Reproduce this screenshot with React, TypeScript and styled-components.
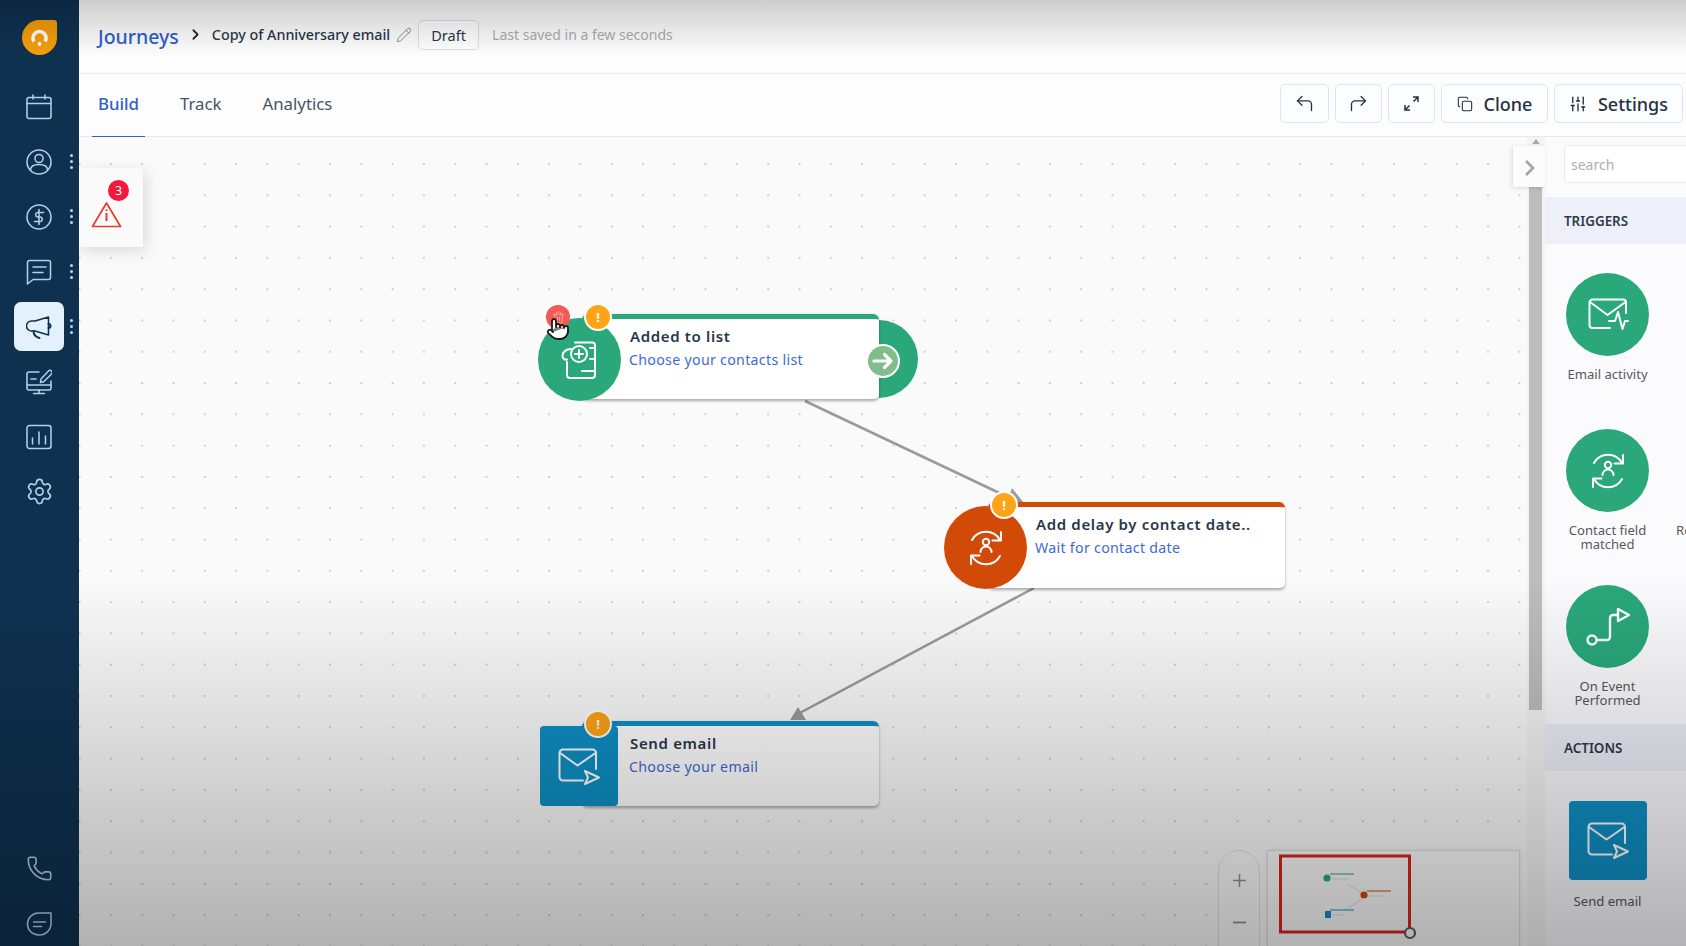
import React from "react";
import styled, { createGlobalStyle } from "styled-components";
import { ChevronRight, Copy, CornerUpLeft, CornerUpRight, Pencil, Phone, Pointer, Settings as Gear, SlidersVertical, Trash2 } from "lucide-react";

const Global = createGlobalStyle`
  html, body { margin: 0; padding: 0; height: 100%; overflow: hidden; }
  body { font-family: "Noto Sans", "Open Sans", Arial, sans-serif; background: #fcfcfd; }
  #root { height: 100%; }
  * { box-sizing: border-box; }
`;

const Shell = styled.div`display: flex; width: 1686px; height: 946px; overflow: hidden; position: relative;`;
const Scrim = styled.div`
  position: absolute; inset: 0; pointer-events: none; z-index: 50;
  background:
    linear-gradient(to bottom, rgba(0,0,0,.19) 0, rgba(0,0,0,0) 56px),
    linear-gradient(to bottom, rgba(0,0,0,0) 575px, rgba(0,0,0,.29) 946px);
`;

const Sidebar = styled.nav`
  width: 79px; flex: none; background: #0f3150; display: flex; flex-direction: column; align-items: stretch;
`;
const Logo = styled.svg`width: 35px; height: 35px; margin: 20px 0 27px 22px; display: block;`;
const NavList = styled.div`display: flex; flex-direction: column; gap: 6px;`;
const NavBottom = styled(NavList)`margin-top: auto; margin-bottom: -2px;`;
const NavRow = styled.div`display: flex; align-items: center; padding-left: 14px;`;
const NavButton = styled.div<{ $active?: boolean }>`
  width: 50px; height: 49px; border-radius: 7px; display: flex; align-items: center; justify-content: center;
  background: ${(p) => (p.$active ? "#e3f1fd" : "transparent")};
  color: ${(p) => (p.$active ? "#0f3150" : "#aed0ea")};
`;
const Kebab = styled.span`
  width: 3px; height: 3px; border-radius: 50%; background: #bcd5e8; margin-left: 5.5px;
  box-shadow: 0 -6px 0 #bcd5e8, 0 6px 0 #bcd5e8;
`;
const NavIcon = styled.svg`width: 26px; height: 26px; fill: none; stroke: currentColor; stroke-width: 1.55; stroke-linecap: round; stroke-linejoin: round;`;

const Main = styled.div`flex: 1; min-width: 0; display: flex; flex-direction: column;`;
const Header = styled.header`
  height: 74px; flex: none; display: flex; align-items: center; padding: 0 0 4px 19px; border-bottom: 1.5px solid #e7e9f1; background: #fdfdfe;
`;
const Journeys = styled.span`font-size: 19.5px; color: #2f5fca; margin-top: 4px; font-weight: 500;`;
const Crumb = styled.span`display: flex; color: #1f2d3d; margin: 0 8px 0 8px;`;
const Title = styled.span`font-size: 14.3px; color: #2b3746; font-weight: 500;`;
const EditIcon = styled.span`display: flex; color: #8f8f8f; margin: 0 6px 0 6px;`;
const Draft = styled.span`
  height: 30px; width: 61px; border: 1.5px solid #dcdfe6; border-radius: 5px; display: flex; align-items: center; justify-content: center;
  font-size: 14.5px; color: #2b3746; background: #fff;
`;
const Saved = styled.span`font-size: 14px; color: #a9adb3; margin-left: 13px;`;

const TabRow = styled.div`
  height: 63px; flex: none; display: flex; align-items: stretch; padding: 0 3px 0 13px; gap: 29px; border-bottom: 1.5px solid #e7e9f1; background: #fdfdfe;
`;
const Tab = styled.div<{ $active?: boolean }>`
  padding: 0 6px 3px; display: flex; align-items: center; font-size: 16.8px; margin-bottom: -1.5px;
  color: ${(p) => (p.$active ? "#2f5fca" : "#485463")};
  font-weight: ${(p) => (p.$active ? 500 : 400)};
  border-bottom: 2.5px solid ${(p) => (p.$active ? "#2f5fca" : "transparent")};
`;
const Actions = styled.div`margin-left: auto; display: flex; gap: 6px; align-items: flex-start; padding-top: 10px;`;
const ToolButton = styled.button<{ $w: number }>`
  width: ${(p) => p.$w}px; height: 39px; padding: 0; border: 1.5px solid #dfe3ec; border-radius: 5px; background: #fcfdff;
  display: flex; align-items: center; justify-content: center; gap: 11px; color: #25313f;
  font: 500 18px "Noto Sans", sans-serif;
`;

const Body = styled.div`flex: 1; min-height: 0; display: flex; position: relative;`;
const Canvas = styled.div`
  flex: 1; min-width: 0; position: relative; overflow: hidden;
  background-color: #fafafa;
  background-image: radial-gradient(circle, #d0d0d0 1px, transparent 1.4px);
  background-size: 31.3px 31.3px;
  background-position: 16.3px 11.3px;
`;
const Wires = styled.svg`position: absolute; left: 0; top: 0; width: 1448px; height: 809px;`;
const Alert = styled.div`
  position: absolute; left: 0; top: 31px; width: 64px; height: 79px; background: #fafafa; box-shadow: 3px 4px 14px rgba(0,0,0,.13);
`;
const AlertBadge = styled.span`
  position: absolute; left: 29px; top: 12px; width: 21px; height: 21px; border-radius: 50%; background: #f5173c; color: #fff;
  font-size: 12.5px; display: flex; align-items: center; justify-content: center;
`;
const AlertIcon = styled.svg`position: absolute; left: 12px; top: 33px; width: 31px; height: 27px;`;

const Node = styled.div<{ $x: number; $y: number }>`
  position: absolute; left: ${(p) => p.$x}px; top: ${(p) => p.$y}px; width: 380px; padding-left: 44px;
`;
const Card = styled.div<{ $c: string; $h: number; $w?: number }>`
  position: relative; z-index: 1; width: ${(p) => p.$w ?? 297}px; height: ${(p) => p.$h}px; background: #fff; border-top: 5px solid ${(p) => p.$c};
  border-radius: 6px 6px 5px 5px; box-shadow: 0 1.5px 3px rgba(0,0,0,.32); padding: 6px 0 0 47px;
`;
const NodeTitle = styled.div`font-size: 15px; line-height: 22px; font-weight: 600; color: #29364a; letter-spacing: .65px; padding-left: 1px;`;
const NodeDesc = styled.div`font-size: 14.2px; line-height: 22px; margin-top: 2px; color: #3f6ad2; letter-spacing: .3px;`;
const NodeCircle = styled.div<{ $c: string }>`
  position: absolute; z-index: 2; left: 0; top: 4px; width: 83px; height: 83px; border-radius: 50%; background: ${(p) => p.$c};
  display: flex; align-items: center; justify-content: center;
`;
const NodeSquare = styled.div`
  position: absolute; z-index: 2; left: 2px; top: 5px; width: 78px; height: 80px; border-radius: 4px; background: #0e8fc4;
  display: flex; align-items: center; justify-content: center;
`;
const Tail = styled.div`
  position: absolute; left: 341px; top: 6px; width: 39px; height: 78px; border-radius: 0 39px 39px 0; background: #2aa87a;
`;
const GoButton = styled.div`
  position: absolute; z-index: 3; left: 328px; top: 30px; width: 34px; height: 34px; border-radius: 50%; background: #80bd8b; border: 2px solid #fff;
  display: flex; align-items: center; justify-content: center; color: #fff;
`;
const Warn = styled.span`
  position: absolute; z-index: 4; left: 46px; top: -11px; width: 28px; height: 28px; border-radius: 50%; border: 2px solid #fff; background: #ffa416;
  color: #fff; font-size: 13px; font-weight: 700; display: flex; align-items: center; justify-content: center;
`;
const Remove = styled.span`
  position: absolute; z-index: 4; left: 8px; top: -9px; width: 24px; height: 24px; border-radius: 50%; background: #f45a55;
  display: flex; align-items: center; justify-content: center; color: #f9a7a2;
`;
const Hand = styled.span`position: absolute; z-index: 5; left: 8px; top: 3px; display: flex;`;

const ZoomPill = styled.div`
  position: absolute; left: 1139px; top: 713px; width: 42px; height: 130px; border: 1.5px solid #e1e1e1; border-radius: 21px 21px 0 0; background: #fafafa;
  display: flex; flex-direction: column; align-items: center; padding-top: 22px; gap: 27px; color: #8b8f96;
`;
const MiniMap = styled.svg`
  position: absolute; left: 1189px; top: 714px; width: 251px; height: 95px; background: #fafafa; overflow: visible;
  outline: 1.5px solid #dedede; box-shadow: 0 0 5px rgba(0,0,0,.12);
`;

const Track = styled.div`width: 18px; flex: none; background: #f4f4f4; display: flex; flex-direction: column; align-items: center; padding: 2px 1px 0 0;`;
const UpArrow = styled.span`width: 0; height: 0; border: 4px solid transparent; border-top: 0; border-bottom: 5px solid #a8a8a8; margin-bottom: 4px;`;
const Thumb = styled.div`width: 13px; height: 562px; background: #bdbdbd;`;
const Collapse = styled.div`
  position: absolute; left: 1434px; top: 9px; width: 32px; height: 41px; background: #fcfcfc; box-shadow: -1px 1px 4px rgba(0,0,0,.14); z-index: 3;
  display: flex; align-items: center; justify-content: center; padding: 2px 0 0 2px; color: #a4a4a4;
`;

const Panel = styled.aside`width: 141px; flex: none; overflow: hidden; background: #fbfbfe; padding-top: 8px;`;
const Search = styled.div`
  width: 160px; height: 38px; margin-left: 19px; border: 1.5px solid #e8e9f0; border-radius: 3px; background: #fff;
  padding: 1px 0 0 6px; display: flex; align-items: center; font-size: 14px; color: #aab0b8;
`;
const Section = styled.div<{ $top: number }>`
  height: 47px; margin-top: ${(p) => p.$top}px; background: #edf0f8; display: flex; align-items: center; padding: 0 0 0 19px;
  font-size: 13.4px; font-weight: 600; color: #2d3b4d;
`;
const ItemGrid = styled.div<{ $pad: string }>`
  display: grid; grid-template-columns: 125px 125px; row-gap: 34px; padding: ${(p) => p.$pad}; width: 250px;
`;
const Item = styled.div`display: flex; flex-direction: column; align-items: center; grid-column: 1;`;
const ItemCircle = styled.div`width: 83px; height: 83px; border-radius: 50%; background: #2aa87a; display: flex; align-items: center; justify-content: center;`;
const ItemSquare = styled.div`width: 78px; height: 79px; border-radius: 4px; background: #0e8fc4; display: flex; align-items: center; justify-content: center;`;
const ItemLabel = styled.div<{ $gap?: number }>`
  margin-top: ${(p) => p.$gap ?? 11}px; width: 104px; min-height: 28px; text-align: center; font-size: 13.1px; line-height: 14px; color: #56595f;
`;
const NextColumnLabel = styled.div`
  grid-column: 2; grid-row: 2; padding: 94px 0 0 6px; font-size: 13.1px; line-height: 14px; color: #56595f;
`;

const Art = styled.svg<{ $w: number; $h: number }>`
  width: ${(p) => p.$w}px; height: ${(p) => p.$h}px; fill: none; stroke: #fff; stroke-width: 2; stroke-linecap: round; stroke-linejoin: round; overflow: visible;
`;

const ListAdd = () => (
  <Art $w={37} $h={38} viewBox="0 0 37 38">
    <path d="M14 1.500H31a3 3 0 0 1 3 3V34a3 3 0 0 1-3 3H9a3 3 0 0 1-3-3V21" />
    <path d="M10 8C5 8 1.500 11 1.500 15a3.600 3.600 0 0 0 4.500 3.500" />
    <circle cx="18" cy="13" r="8" />
    <path d="M18 9v8M14 13h8M29 7h5M29 18h5M21 30h13" />
  </Art>
);
const SyncPerson = () => (
  <Art $w={34} $h={36} viewBox="0 0 34 36">
    <path d="M3 10A16 16 0 0 1 31 10" />
    <path d="M32 2v8.500h-8.500" />
    <path d="M31 26A16 16 0 0 1 3 26" />
    <path d="M2 34v-8.500h8.500" />
    <circle cx="17" cy="12" r="3.200" />
    <path d="M11.500 22a5.500 5.500 0 0 1 11 0" />
  </Art>
);
const MailSend = () => (
  <Art $w={42} $h={37} viewBox="0 0 42 37">
    <path d="M38 21V5a3.500 3.500 0 0 0-3.500-3.500H5A3.500 3.500 0 0 0 1.500 5v24A3.500 3.500 0 0 0 5 32.500h20" />
    <path d="M2 5l17.500 12.500L37.500 5" />
    <path d="M27 23l14 6.500-14 6.500 3-6.500z" />
  </Art>
);
const MailPulse = () => (
  <Art $w={40} $h={33} viewBox="0 0 40 33">
    <path d="M38 15V4.500A3 3 0 0 0 35 1.500H4.500a3 3 0 0 0-3 3V27a3 3 0 0 0 3 3H22" />
    <path d="M2 4l17.500 13L37.500 4" />
    <path d="M21 23h6l3-9 4.500 17 2.500-8h3" />
  </Art>
);
const RouteIcon = () => (
  <Art $w={42} $h={36} viewBox="0 0 42 36">
    <circle cx="5" cy="31" r="4.500" strokeWidth="2.400" />
    <path d="M10 31h10a3 3 0 0 0 3-3V9a3 3 0 0 1 3-3h5" strokeWidth="2.400" />
    <path d="M31 0l11 6-11 6z" strokeWidth="2.400" />
  </Art>
);

const nav = [
  { key: "cal", d: <><rect x="1" y="3.500" width="24" height="21" rx="2" /><path d="M1 9.500h24M7 1v4M19 1v4" /></> },
  { key: "user", kebab: true, d: <><circle cx="13" cy="13" r="12" /><circle cx="13" cy="9.500" r="4" /><path d="M4.500 21c0-4 3-5.500 8.500-5.500s8.500 1.500 8.500 5.500" /></> },
  { key: "usd", kebab: true, d: <><circle cx="13" cy="13" r="12" /><path d="M17.500 8.500h-6a2.300 2.300 0 0 0 0 4.500h3a2.300 2.300 0 0 1 0 4.500H8.500M13 5.500v15" /></> },
  { key: "chat", kebab: true, d: <><path d="M3.500 1.500h19a2 2 0 0 1 2 2v15a2 2 0 0 1-2 2H7L1.500 25V3.500a2 2 0 0 1 2-2z" /><path d="M7 8h13M7 13.500h10" /></> },
  { key: "mega", kebab: true, active: true, d: <><path d="M22.500 3L9 7H5.500a4.500 4.500 0 0 0 0 10H9l13.500 4z" /><path d="M22.500 10a2 2 0 0 1 0 4M7.500 17c0 4 2 6 6 7" strokeWidth="2" /></> },
  { key: "mon", d: <><path d="M13 3H3a2 2 0 0 0-2 2v14a2 2 0 0 0 2 2h20a2 2 0 0 0 2-2v-7" /><path d="M1 16h24M13 21v3.500M7.500 24.500h11M5 10h5M15 10l7.500-8a2 2 0 0 1 3 3L18 12.500l-3.500 1z" /></> },
  { key: "bar", d: <><rect x="1" y="1.500" width="24" height="23" rx="2.500" /><path d="M6.500 14v6M13 8v12M19.500 12v8" /></> },
];

export default function App() {
  return (
    <Shell>
      <Global />
      <Sidebar>
        <Logo viewBox="0 0 35 35">
          <path d="M17.500 0H32a3 3 0 0 1 3 3v14.500A17.500 17.500 0 1 1 17.500 0z" fill="#f59e0b" />
          <path d="M12 21.500a6.500 6.500 0 1 1 11 0" fill="none" stroke="#fff" strokeWidth="3.600" />
          <circle cx="17.500" cy="24" r="1.900" fill="#fff" />
        </Logo>
        <NavList>
          {nav.map((n) => (
            <NavRow key={n.key}>
              <NavButton $active={n.active}>
                <NavIcon viewBox="0 0 26 26">{n.d}</NavIcon>
              </NavButton>
              {n.kebab && <Kebab />}
            </NavRow>
          ))}
          <NavRow>
            <NavButton><Gear size={29} strokeWidth={1.4} /></NavButton>
          </NavRow>
        </NavList>
        <NavBottom>
          <NavRow><NavButton><Phone size={27} strokeWidth={1.4} /></NavButton></NavRow>
          <NavRow>
            <NavButton>
              <NavIcon viewBox="0 0 26 26"><path d="M25 2v10.500A11.500 11.500 0 0 1 13.500 24h-1a11 11 0 0 1 0-22zM7.500 11h12M7.500 15.500h8" /></NavIcon>
            </NavButton>
          </NavRow>
        </NavBottom>
      </Sidebar>

      <Main>
        <Header>
          <Journeys>Journeys</Journeys>
          <Crumb><ChevronRight size={17} strokeWidth={2.6} /></Crumb>
          <Title>Copy of Anniversary email</Title>
          <EditIcon><Pencil size={16} strokeWidth={1.5} /></EditIcon>
          <Draft>Draft</Draft>
          <Saved>Last saved in a few seconds</Saved>
        </Header>
        <TabRow>
          <Tab $active>Build</Tab>
          <Tab>Track</Tab>
          <Tab>Analytics</Tab>
          <Actions>
            <ToolButton $w={49}><CornerUpLeft size={21} strokeWidth={1.5} /></ToolButton>
            <ToolButton $w={47}><CornerUpRight size={21} strokeWidth={1.5} /></ToolButton>
            <ToolButton $w={47}>
              <svg width="15" height="15" viewBox="0 0 15 15" fill="none" stroke="#25313f" strokeWidth="1.500">
                <path d="M9 1h5v5M14 1L9.500 5.500M6 14H1V9M1 14l4.500-4.500" />
              </svg>
            </ToolButton>
            <ToolButton $w={107}><Copy size={16} strokeWidth={1.6} />Clone</ToolButton>
            <ToolButton $w={129}><SlidersVertical size={18} strokeWidth={1.8} />Settings</ToolButton>
          </Actions>
        </TabRow>
        <Body>
          <Canvas>
            <Wires viewBox="79 137 1448 809">
              <g stroke="#9a9a9a" strokeWidth="2.500" fill="#9a9a9a">
                <path d="M805 401L1010 498" fill="none" />
                <path d="M1012 488l11 14-16 0z" stroke="none" />
                <path d="M1034 588L796 715" fill="none" />
                <path d="M806 720h-16l8-13z" stroke="none" />
              </g>
            </Wires>
            <Alert>
              <AlertBadge>3</AlertBadge>
              <AlertIcon viewBox="0 0 31 27" fill="none" stroke="#e8392c" strokeWidth="1.700" strokeLinejoin="round">
                <path d="M15.500 2L1.500 25.500h28z" />
                <path d="M15.500 12v8" strokeWidth="2" />
                <path d="M15.500 8.500v1.500" strokeWidth="2" />
              </AlertIcon>
            </Alert>

            <Node $x={459} $y={177}>
              <Tail />
              <Card $c="#2aa87a" $h={85}>
                <NodeTitle>Added to list</NodeTitle>
                <NodeDesc>Choose your contacts list</NodeDesc>
              </Card>
              <NodeCircle $c="#2aa87a"><ListAdd /></NodeCircle>
              <GoButton>
                <svg width="22" height="18" viewBox="0 0 22 18" fill="none" stroke="#fff" strokeWidth="3.200" strokeLinecap="round" strokeLinejoin="round">
                  <path d="M2 9h17M12.500 2.500L19 9l-6.500 6.500" />
                </svg>
              </GoButton>
              <Warn>!</Warn>
              <Remove><Trash2 size={13} strokeWidth={1.8} /></Remove>
              <Hand>
                <Pointer size={24} fill="#fff" color="#1c1c1c" strokeWidth={1.8} />
              </Hand>
            </Node>

            <Node $x={865} $y={365}>
              <Card $c="#d14a08" $h={86}>
                <NodeTitle>Add delay by contact date..</NodeTitle>
                <NodeDesc>Wait for contact date</NodeDesc>
              </Card>
              <NodeCircle $c="#d14a08"><SyncPerson /></NodeCircle>
              <Warn>!</Warn>
            </Node>

            <Node $x={459} $y={584}>
              <Card $c="#0e8fc4" $h={85}>
                <NodeTitle>Send email</NodeTitle>
                <NodeDesc>Choose your email</NodeDesc>
              </Card>
              <NodeSquare><MailSend /></NodeSquare>
              <Warn>!</Warn>
            </Node>

            <ZoomPill>
              <svg width="15" height="15" viewBox="0 0 15 15" stroke="currentColor" strokeWidth="1.500"><path d="M7.500 1v13M1 7.500h13" /></svg>
              <svg width="15" height="15" viewBox="0 0 15 15" stroke="currentColor" strokeWidth="1.800"><path d="M1 7.500h13" /></svg>
            </ZoomPill>
            <MiniMap viewBox="0 0 251 95">
              <rect x="12.500" y="5" width="129" height="76" fill="none" stroke="#d7261b" strokeWidth="3" />
              <circle cx="142" cy="82" r="5" fill="#fafafa" stroke="#55596a" strokeWidth="2.200" />
              <circle cx="59" cy="27" r="3.600" fill="#2aa87a" />
              <path d="M62 23h24" stroke="#2aa87a" strokeWidth="1" />
              <path d="M64 28h16" stroke="#d4d4d4" strokeWidth=".8" />
              <path d="M79 33l15 9M94 48L78 59" stroke="#d0d0d0" strokeWidth=".8" />
              <circle cx="96" cy="44" r="3.600" fill="#d14a08" />
              <path d="M99 40h24" stroke="#d14a08" strokeWidth="1" />
              <path d="M101 45h14" stroke="#d4d4d4" strokeWidth=".8" />
              <rect x="57" y="60" width="6" height="7" fill="#0e8fc4" />
              <path d="M62 59h24" stroke="#0e8fc4" strokeWidth="1" />
              <path d="M64 64h13" stroke="#d4d4d4" strokeWidth=".8" />
            </MiniMap>
          </Canvas>
          <Track>
            <UpArrow />
            <Thumb />
          </Track>
          <Collapse>
            <svg width="12" height="18" viewBox="0 0 12 18" fill="none" stroke="currentColor" strokeWidth="2.600"><path d="M2 2l7 7-7 7" /></svg>
          </Collapse>
          <Panel>
            <Search>search</Search>
            <Section $top={14}>TRIGGERS</Section>
            <ItemGrid $pad="29px 0 17px">
              <Item>
                <ItemCircle><MailPulse /></ItemCircle>
                <ItemLabel>Email activity</ItemLabel>
              </Item>
              <Item>
                <ItemCircle><SyncPerson /></ItemCircle>
                <ItemLabel>Contact field matched</ItemLabel>
              </Item>
              <NextColumnLabel>Re</NextColumnLabel>
              <Item>
                <ItemCircle><RouteIcon /></ItemCircle>
                <ItemLabel>On Event Performed</ItemLabel>
              </Item>
            </ItemGrid>
            <Section $top={0}>ACTIONS</Section>
            <ItemGrid $pad="30px 0 0">
              <Item>
                <ItemSquare><MailSend /></ItemSquare>
                <ItemLabel $gap={14}>Send email</ItemLabel>
              </Item>
            </ItemGrid>
          </Panel>
        </Body>
      </Main>
      <Scrim />
    </Shell>
  );
}
